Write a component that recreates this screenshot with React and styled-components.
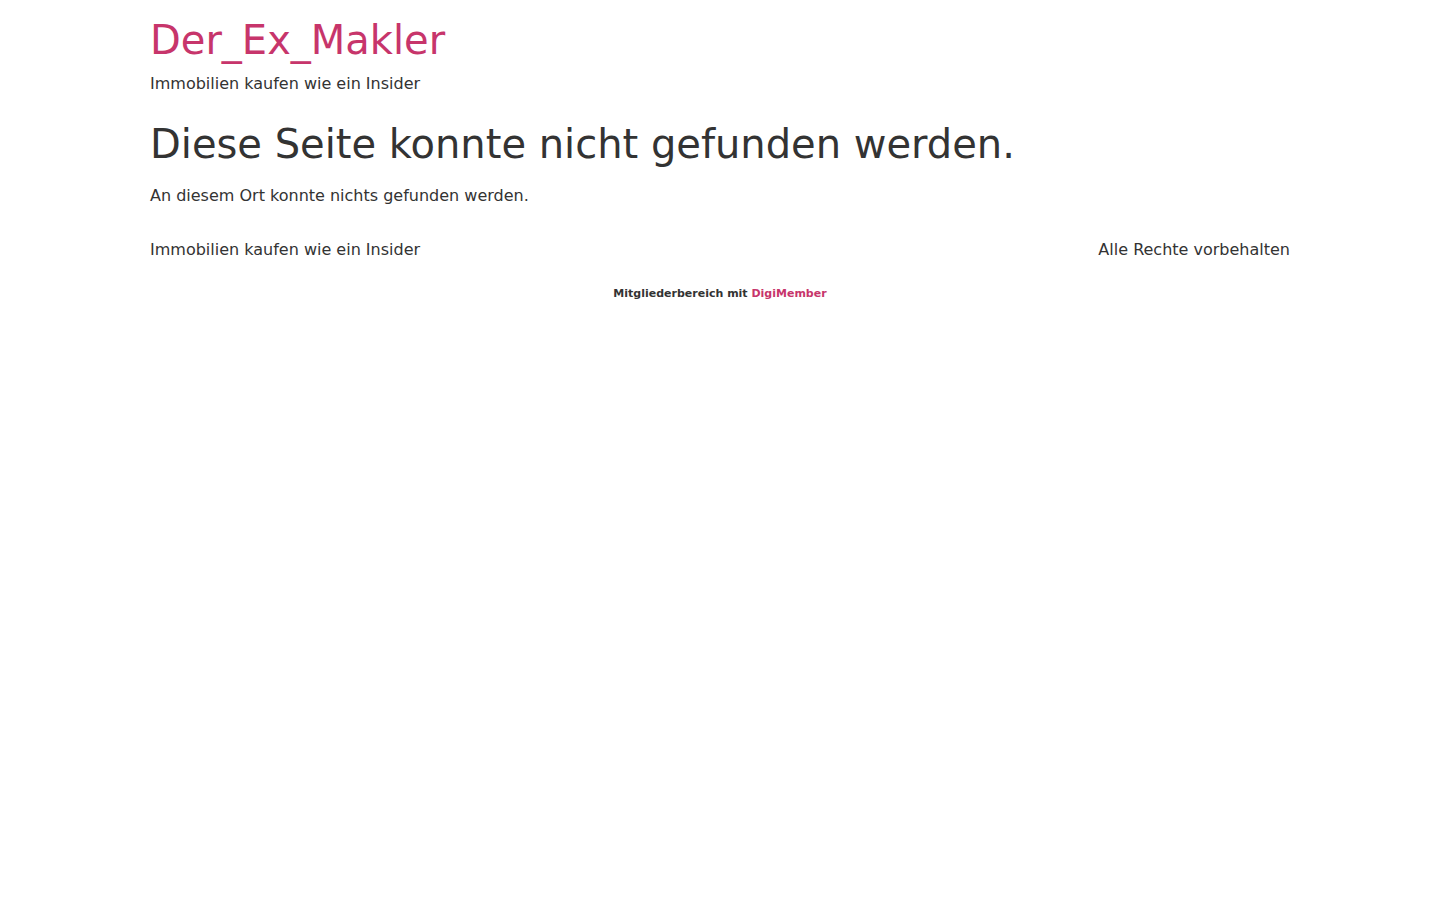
import styled, { createGlobalStyle } from "styled-components";

const Global = createGlobalStyle`
  body {
    margin: 0;
    background: #ffffff;
    color: #333333;
    font-family: "DejaVu Sans", "Liberation Sans", sans-serif;
  }
`;

const pink = "#c7356b";

const Page = styled.div`
  width: 1140px;
  margin: 0 auto;
`;

const Header = styled.header`
  padding-top: 16px;
`;

const SiteTitle = styled.a`
  display: block;
  font-size: 40px;
  line-height: 48px;
  color: ${pink};
  text-decoration: none;
`;

const Tagline = styled.p`
  margin: 9px 0 0;
  font-size: 16px;
  line-height: 22px;
`;

const Main = styled.main`
  padding-top: 25px;
`;

const Heading = styled.h1`
  margin: 0;
  font-size: 40px;
  font-weight: normal;
  line-height: 48px;
`;

const Text = styled.p`
  margin: 17px 0 0;
  font-size: 16px;
  line-height: 22px;
`;

const Footer = styled.footer`
  display: flex;
  justify-content: space-between;
  margin-top: 32px;
  font-size: 16px;
  line-height: 22px;
`;

const Credit = styled.div`
  margin-top: 26px;
  text-align: center;
  font-size: 11px;
  font-weight: bold;
  line-height: 14px;
`;

const CreditLink = styled.a`
  color: ${pink};
  text-decoration: none;
`;

export default function App() {
  return (
    <>
      <Global />
      <Page>
        <Header>
          <SiteTitle href="#">Der_Ex_Makler</SiteTitle>
          <Tagline>Immobilien kaufen wie ein Insider</Tagline>
        </Header>
        <Main>
          <Heading>Diese Seite konnte nicht gefunden werden.</Heading>
          <Text>An diesem Ort konnte nichts gefunden werden.</Text>
        </Main>
        <Footer>
          <span>Immobilien kaufen wie ein Insider</span>
          <span>Alle Rechte vorbehalten</span>
        </Footer>
      </Page>
      <Credit>
        Mitgliederbereich mit <CreditLink href="#">DigiMember</CreditLink>
      </Credit>
    </>
  );
}
